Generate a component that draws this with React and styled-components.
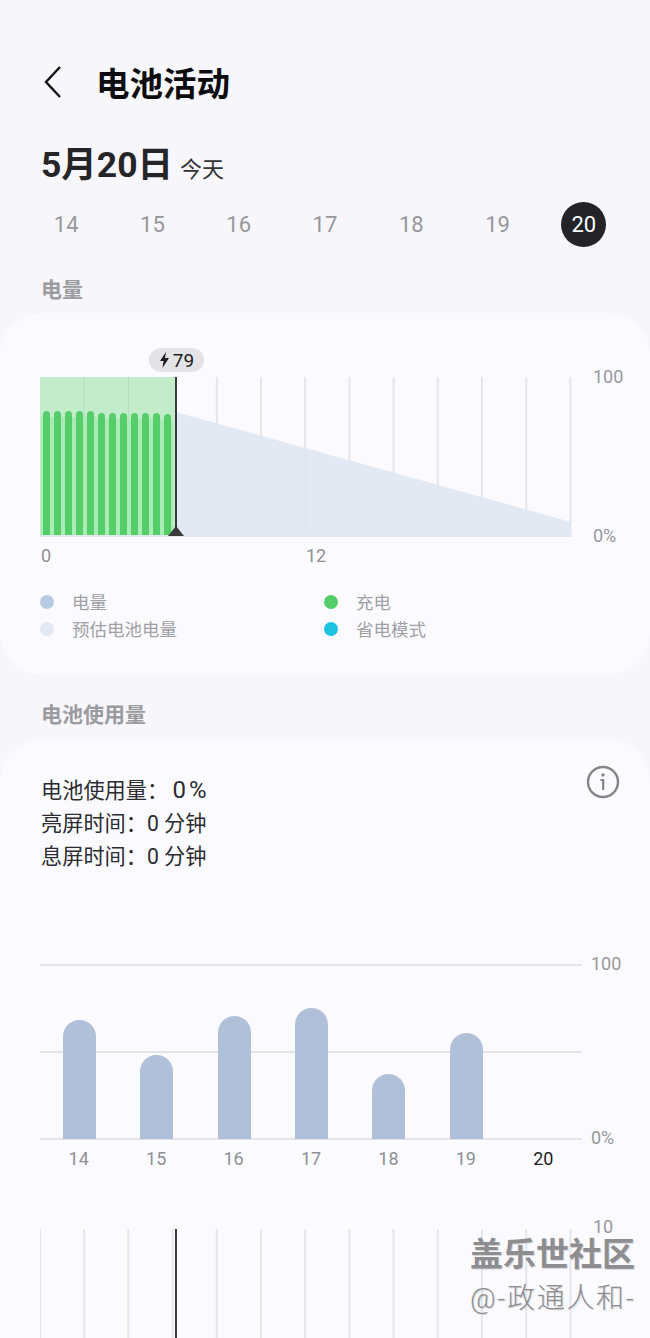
import React from "react";
import styled, { createGlobalStyle } from "styled-components";

const GlobalStyle = createGlobalStyle`
  html, body {
    margin: 0;
    padding: 0;
    background: #f6f6fb;
  }
  body {
    font-family: Roboto, "Noto Sans CJK SC", sans-serif;
  }
`;

const days = [14, 15, 16, 17, 18, 19, 20];
const usage = [
  { x: 23, top: 56 },
  { x: 100, top: 91 },
  { x: 178, top: 52 },
  { x: 255, top: 44 },
  { x: 332, top: 110 },
  { x: 410, top: 69 },
];
const chargeTops = [34, 34, 34, 34, 34, 36, 36, 36, 36, 36, 36, 37];
const gridLines = Array.from({ length: 13 }, (_, i) => i * 44.2);

function BatteryChart() {
  return (
    <svg width="532" height="160" viewBox="0 0 532 160" style={{ display: "block" }}>
      {gridLines.map((x) => (
        <line key={x} x1={x} x2={x} y1="0" y2="159" stroke="#e3e6ed" strokeWidth="2" />
      ))}
      <polygon points="136,35 531,145 531,159 136,159" fill="#dfe7f1" fillOpacity="0.9" />
      <rect x="0" y="0" width="135" height="159" fill="#c3eccb" />
      <line x1="44.2" x2="44.2" y1="0" y2="159" stroke="#b3dcbb" strokeWidth="1" />
      <line x1="88.4" x2="88.4" y1="0" y2="159" stroke="#b3dcbb" strokeWidth="1" />
      {chargeTops.map((top, i) => (
        <React.Fragment key={i}>
          <rect x={i * 11 + 1} y={top + 6} width="11" height={153 - top} fill="#a9ebb4" />
          <path
            d={`M${i * 11 + 3} 159 V${top + 3.5} a3.5 3.5 0 0 1 7 0 V159 Z`}
            fill="#55ce6a"
          />
        </React.Fragment>
      ))}
      <rect x="0" y="158" width="532" height="2" fill="#e3e6ed" />
      <line x1="136" x2="136" y1="0" y2="159" stroke="#3a3a3c" strokeWidth="2" />
      <polygon points="128,159 136,149 144,159" fill="#3a3a3c" />
    </svg>
  );
}

function UsageChart() {
  return (
    <svg width="542" height="176" viewBox="0 0 542 176" style={{ display: "block" }}>
      <rect x="0" y="0" width="542" height="2" fill="#e4e4ea" />
      <rect x="0" y="87" width="542" height="2" fill="#e4e4ea" />
      <rect x="0" y="174" width="542" height="2" fill="#e4e4ea" />
      {usage.map(({ x, top }) => (
        <path
          key={x}
          d={`M${x} 175 V${top + 16.5} a16.5 16.5 0 0 1 33 0 V175 Z`}
          fill="#b0c0d9"
        />
      ))}
    </svg>
  );
}

function TimeChart() {
  return (
    <svg width="532" height="110" viewBox="0 0 532 110" style={{ display: "block" }}>
      {gridLines.map((x) => (
        <line key={x} x1={x} x2={x} y1="0" y2="110" stroke="#e3e6ed" strokeWidth="2" />
      ))}
      <line x1="136" x2="136" y1="0" y2="110" stroke="#3a3a3c" strokeWidth="2" />
    </svg>
  );
}

export default function App() {
  return (
    <Page>
      <GlobalStyle />
      <Header>
        <BackIcon width="18" height="34" viewBox="0 0 18 34">
          <path d="M16 2 L2 17 L16 32" fill="none" stroke="#111" strokeWidth="2.4" />
        </BackIcon>
        <Title>电池活动</Title>
      </Header>

      <DateRow>
        <DateText>5月20日</DateText>
        <Today>今天</Today>
      </DateRow>

      <DayRow>
        {days.map((d) => (
          <Day key={d} $active={d === 20}>{d}</Day>
        ))}
      </DayRow>

      <SectionLabel>电量</SectionLabel>
      <BatteryCard>
        <ChartRow>
          <ChartBox>
            <Bubble>
              <svg width="11" height="16" viewBox="0 0 11 16">
                <path d="M7 0 L1 9 H4.6 L3.4 16 L10 6 H6 Z" fill="#1c1c1e" />
              </svg>
              79
            </Bubble>
            <BatteryChart />
          </ChartBox>
          <Axis $height={159} $gap={21}>
            <span>100</span>
            <span>0%</span>
          </Axis>
        </ChartRow>
        <HourRow>
          <span>0</span>
          <span>12</span>
        </HourRow>
        <Legend>
          <LegendItem><Dot $color="#b9cbe4" />电量</LegendItem>
          <LegendItem><Dot $color="#55ce6a" />充电</LegendItem>
          <LegendItem><Dot $color="#e2e9f2" />预估电池电量</LegendItem>
          <LegendItem><Dot $color="#1cc3de" />省电模式</LegendItem>
        </Legend>
      </BatteryCard>

      <UsageLabel>电池使用量</UsageLabel>
      <UsageCard>
        <StatsRow>
          <Stats>
            <div>电池使用量：&nbsp;<Percent>0%</Percent></div>
            <div>亮屏时间：0 分钟</div>
            <div>息屏时间：0 分钟</div>
          </Stats>
          <svg width="34" height="34" viewBox="0 0 34 34">
            <circle cx="17" cy="17" r="15" fill="none" stroke="#858589" strokeWidth="2.4" />
            <circle cx="17" cy="10" r="1.7" fill="#858589" />
            <path d="M14.5 15 H17.2 V25" fill="none" stroke="#858589" strokeWidth="2.2" />
          </svg>
        </StatsRow>

        <UsageChartRow>
          <UsageChart />
          <Axis $height={174} $gap={9}>
            <span>100</span>
            <span>0%</span>
          </Axis>
        </UsageChartRow>
        <UsageDays>
          {days.map((d) => (
            <UsageDay key={d} $active={d === 20}>{d}</UsageDay>
          ))}
        </UsageDays>

        <TimeRow>
          <TimeChart />
          <TimeTick>10</TimeTick>
        </TimeRow>
      </UsageCard>

      <Watermark>
        <strong>盖乐世社区</strong>
        <span>@-政通人和-</span>
      </Watermark>
    </Page>
  );
}

const Page = styled.div`
  position: relative;
  width: 650px;
  height: 1338px;
  overflow: hidden;
  background: #f6f6fb;
`;

const Header = styled.header`
  display: flex;
  align-items: center;
  gap: 34px;
  height: 50px;
  padding: 58px 0 0 44px;
`;

const BackIcon = styled.svg`
  margin-top: -3px;
`;

const Title = styled.h1`
  margin: 0;
  padding-top: 4px;
  font-size: 33.5px;
  line-height: 50px;
  font-weight: 700;
  color: #0c0c0e;
`;

const DateRow = styled.div`
  display: flex;
  align-items: baseline;
  gap: 7px;
  height: 46px;
  margin-top: 34px;
  padding-left: 41px;
`;

const DateText = styled.div`
  font-size: 35.5px;
  line-height: 46px;
  font-weight: 700;
  color: #252528;
`;

const Today = styled.div`
  font-size: 22px;
  color: #333336;
`;

const DayRow = styled.div`
  display: grid;
  grid-template-columns: repeat(7, 1fr);
  margin-top: 14px;
  padding: 0 23px;
`;

const Day = styled.div`
  justify-self: center;
  width: 45px;
  height: 45px;
  border-radius: 50%;
  display: flex;
  align-items: center;
  justify-content: center;
  font-size: 22px;
  color: ${(p) => (p.$active ? "#ffffff" : "#97979c")};
  background: ${(p) => (p.$active ? "#232328" : "transparent")};
`;

const SectionLabel = styled.div`
  height: 28px;
  margin: 29px 0 9px;
  padding-left: 41px;
  font-size: 21px;
  line-height: 28px;
  font-weight: 700;
  color: #9a9a9f;
`;

const UsageLabel = styled(SectionLabel)`
  margin-top: 26px;
  margin-bottom: 10px;
`;

const Card = styled.section`
  background: #fbfbff;
  border-radius: 42px;
`;

const BatteryCard = styled(Card)`
  height: 362px;
  box-sizing: border-box;
  padding-top: 64px;
`;

const ChartRow = styled.div`
  display: flex;
  padding-left: 40px;
`;

const ChartBox = styled.div`
  position: relative;
  width: 532px;
`;

const Bubble = styled.div`
  position: absolute;
  left: 109px;
  top: -29px;
  width: 55px;
  height: 24px;
  border-radius: 12px;
  background: #e4e4e8;
  display: flex;
  align-items: center;
  justify-content: center;
  gap: 3px;
  font-size: 19px;
  color: #1c1c1e;
`;

const Axis = styled.div`
  display: flex;
  flex-direction: column;
  justify-content: space-between;
  height: ${(p) => p.$height + 22}px;
  margin: -11px 0 -11px ${(p) => p.$gap}px;
  font-size: 18px;
  line-height: 22px;
  color: #97979c;
`;

const HourRow = styled.div`
  display: grid;
  grid-template-columns: 265px auto;
  justify-content: start;
  height: 22px;
  margin-top: 8px;
  padding-left: 41px;
  font-size: 18px;
  line-height: 22px;
  color: #8f8f94;
`;

const Legend = styled.div`
  display: grid;
  grid-template-columns: 284px auto;
  justify-content: start;
  grid-auto-rows: 27px;
  margin-top: 21px;
  padding-left: 40px;
`;

const LegendItem = styled.div`
  display: flex;
  align-items: center;
  gap: 18px;
  font-size: 17.5px;
  color: #a0a0a5;
`;

const Dot = styled.span`
  width: 14px;
  height: 14px;
  border-radius: 50%;
  background: ${(p) => p.$color};
`;

const UsageCard = styled(Card)`
  height: 700px;
  padding-top: 26px;
`;

const StatsRow = styled.div`
  display: flex;
  justify-content: space-between;
  align-items: flex-start;
  height: 108px;
  padding: 0 30px 0 41px;
`;

const Stats = styled.div`
  padding-top: 9px;
  font-size: 21.2px;
  line-height: 33px;
  color: #2c2c2f;
`;

const Percent = styled.span`
  margin-left: -1px;
  font-size: 24px;
  letter-spacing: 3px;
`;

const UsageChartRow = styled.div`
  display: flex;
  margin-top: 91px;
  padding-left: 40px;
`;

const UsageDays = styled.div`
  display: grid;
  grid-template-columns: repeat(7, 1fr);
  width: 542px;
  margin-top: 8px;
  padding-left: 40px;
`;

const UsageDay = styled.div`
  text-align: center;
  font-size: 18px;
  line-height: 22px;
  color: ${(p) => (p.$active ? "#1c1c1e" : "#8f8f94")};
`;

const TimeRow = styled.div`
  display: flex;
  margin-top: 59px;
  padding-left: 40px;
`;

const TimeTick = styled.div`
  margin: -13px 0 0 21px;
  font-size: 18px;
  line-height: 22px;
  color: #97979c;
`;

const Watermark = styled.div`
  position: absolute;
  left: 470px;
  top: 1239px;
  display: flex;
  flex-direction: column;
  color: #8e8e90;
  text-shadow: 1px 1px 0 #d8d8da;

  strong {
    font-size: 33px;
    line-height: 32px;
    font-weight: 700;
  }
  span {
    margin-top: 11px;
    font-size: 28px;
    line-height: 34px;
    font-weight: 300;
    letter-spacing: 1.7px;
    white-space: nowrap;
  }
`;
